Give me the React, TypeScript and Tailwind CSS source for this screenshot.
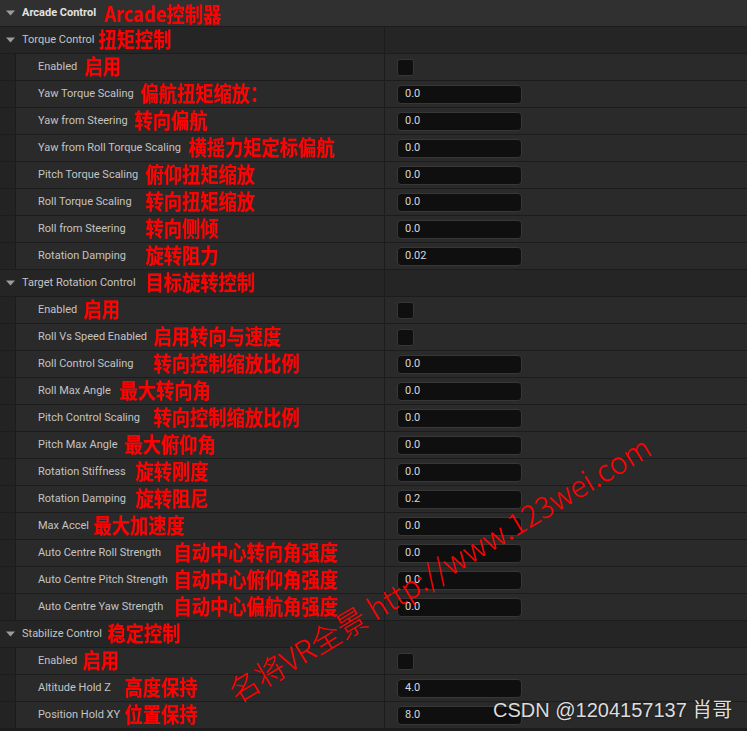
import React from "react";

type RowKind = "header" | "category" | "bool" | "num";

type Row = {
  kind: RowKind;
  label: string;
  value?: string;
  note: string;
  noteX: number;
};

const rows: Row[] = [
  { kind: "header", label: "Arcade Control", note: "Arcade控制器", noteX: 104 },
  { kind: "category", label: "Torque Control", note: "扭矩控制", noteX: 98 },
  { kind: "bool", label: "Enabled", note: "启用", noteX: 84 },
  { kind: "num", label: "Yaw Torque Scaling", value: "0.0", note: "偏航扭矩缩放：", noteX: 140 },
  { kind: "num", label: "Yaw from Steering", value: "0.0", note: "转向偏航", noteX: 134 },
  { kind: "num", label: "Yaw from Roll Torque Scaling", value: "0.0", note: "横摇力矩定标偏航", noteX: 188 },
  { kind: "num", label: "Pitch Torque Scaling", value: "0.0", note: "俯仰扭矩缩放", noteX: 145 },
  { kind: "num", label: "Roll Torque Scaling", value: "0.0", note: "转向扭矩缩放", noteX: 145 },
  { kind: "num", label: "Roll from Steering", value: "0.0", note: "转向侧倾", noteX: 145 },
  { kind: "num", label: "Rotation Damping", value: "0.02", note: "旋转阻力", noteX: 145 },
  { kind: "category", label: "Target Rotation Control", note: "目标旋转控制", noteX: 145 },
  { kind: "bool", label: "Enabled", note: "启用", noteX: 83 },
  { kind: "bool", label: "Roll Vs Speed Enabled", note: "启用转向与速度", noteX: 153 },
  { kind: "num", label: "Roll Control Scaling", value: "0.0", note: "转向控制缩放比例", noteX: 153 },
  { kind: "num", label: "Roll Max Angle", value: "0.0", note: "最大转向角", noteX: 119 },
  { kind: "num", label: "Pitch Control Scaling", value: "0.0", note: "转向控制缩放比例", noteX: 153 },
  { kind: "num", label: "Pitch Max Angle", value: "0.0", note: "最大俯仰角", noteX: 124 },
  { kind: "num", label: "Rotation Stiffness", value: "0.0", note: "旋转刚度", noteX: 135 },
  { kind: "num", label: "Rotation Damping", value: "0.2", note: "旋转阻尼", noteX: 135 },
  { kind: "num", label: "Max Accel", value: "0.0", note: "最大加速度", noteX: 93 },
  { kind: "num", label: "Auto Centre Roll Strength", value: "0.0", note: "自动中心转向角强度", noteX: 173 },
  { kind: "num", label: "Auto Centre Pitch Strength", value: "0.0", note: "自动中心俯仰角强度", noteX: 173 },
  { kind: "num", label: "Auto Centre Yaw Strength", value: "0.0", note: "自动中心偏航角强度", noteX: 173 },
  { kind: "category", label: "Stabilize Control", note: "稳定控制", noteX: 107 },
  { kind: "bool", label: "Enabled", note: "启用", noteX: 82 },
  { kind: "num", label: "Altitude Hold Z", value: "4.0", note: "高度保持", noteX: 124 },
  { kind: "num", label: "Position Hold XY", value: "8.0", note: "位置保持", noteX: 124 },
];

function Arrow() {
  return (
    <svg width="9" height="6" viewBox="0 0 9 6" className="shrink-0">
      <path d="M0 0.5 L9 0.5 L4.5 5.5 Z" fill="#9c9c9c" />
    </svg>
  );
}

// red annotation pasted over the screenshot
function Note({ text, x, top }: { text: string; x: number; top?: boolean }) {
  return (
    <span
      className={`pointer-events-none absolute z-10 inline-block origin-left scale-x-[0.87] whitespace-nowrap text-[21px] font-bold leading-[26px] text-[#ff0000] [font-family:'Noto_Sans_CJK_SC','Noto_Sans',sans-serif] ${
        top ? "top-0" : "top-[-2px]"
      }`}
      style={{ left: x }}
    >
      {text}
    </span>
  );
}

function PropertyRow({ row }: { row: Row }) {
  if (row.kind === "header") {
    return (
      <div className="relative flex h-[27px] items-center border-b border-[#1c1c1c] bg-[#303030] pl-[6px]">
        <Arrow />
        <span className="ml-[7px] text-[11px] font-bold text-[#e2e2e2]">{row.label}</span>
        <Note text={row.note} x={row.noteX} top />
      </div>
    );
  }

  if (row.kind === "category") {
    return (
      <div className="relative flex h-[27px] border-b border-[#1c1c1c] bg-[#252525]">
        <div className="flex w-[385px] items-center border-r border-[#1c1c1c] pl-[6px]">
          <Arrow />
          <span className="ml-[7px] text-[11px] text-[#c4c4c4]">{row.label}</span>
        </div>
        <div className="flex-1" />
        <Note text={row.note} x={row.noteX} />
      </div>
    );
  }

  return (
    <div className="relative flex h-[27px] border-b border-[#1c1c1c] bg-[#2a2a2a]">
      <div className="w-[16px] border-r border-[#1b1b1b] bg-[#232323]" />
      <div className="flex w-[369px] items-center border-r border-[#1c1c1c] pl-[22px]">
        <span className="text-[11px] text-[#c4c4c4]">{row.label}</span>
      </div>
      <div className="flex flex-1 items-center pl-[12px]">
        {row.kind === "bool" ? (
          <div className="h-[17px] w-[17px] rounded-[3px] border border-[#363636] bg-[#0f0f0f]" />
        ) : (
          <div className="flex h-[19px] w-[125px] items-center rounded-[4px] border border-[#373737] bg-[#0f0f0f] pl-[7px] text-[11px] text-[#d8d8d8]">
            {row.value}
          </div>
        )}
      </div>
      <Note text={row.note} x={row.noteX} />
    </div>
  );
}

export default function App() {
  return (
    <div className="relative h-[731px] w-full overflow-hidden bg-[#1c1c1c] [font-family:Roboto,'Liberation_Sans',sans-serif]">
      {rows.map((row, i) => (
        <PropertyRow key={i} row={row} />
      ))}

      {/* watermark */}
      <div className="pointer-events-none absolute left-[238px] top-[676px] z-20 origin-bottom-left -rotate-[31deg] whitespace-nowrap text-[30px] font-light leading-[30px] text-[#ff0000] [font-family:'Noto_Sans_CJK_SC','Noto_Sans',sans-serif]">
        名将VR全景 http://www.123wei.com
      </div>

      <div className="pointer-events-none absolute left-[493px] top-[698px] z-20 whitespace-nowrap text-[20px] leading-[24px] text-[#dcdcdc] [font-family:'Liberation_Sans','Noto_Sans_CJK_SC',sans-serif] [text-shadow:0_0_2px_rgba(0,0,0,0.6)]">
        CSDN @1204157137 肖哥
      </div>
    </div>
  );
}
